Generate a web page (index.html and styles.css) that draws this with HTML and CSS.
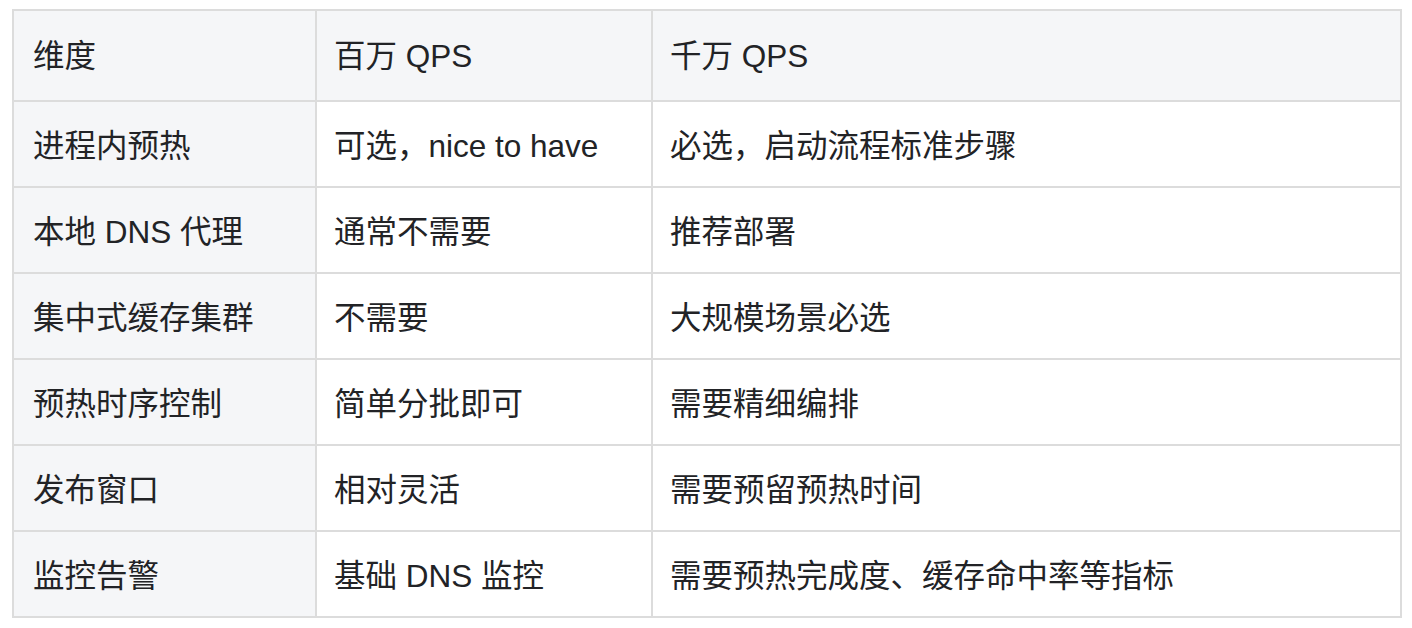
FILE: index.html
```html
<!DOCTYPE html>
<html lang="zh-CN">
<head>
<meta charset="utf-8">
<title>对比</title>
<link rel="stylesheet" href="styles.css">
</head>
<body>
<table class="cmp">
  <colgroup>
    <col class="w1">
    <col class="w2">
    <col class="w3">
  </colgroup>
  <thead>
    <tr><th class="c1">维度</th><th class="c2">百万 QPS</th><th class="c3">千万 QPS</th></tr>
  </thead>
  <tbody>
    <tr><td class="c1">进程内预热</td><td class="c2">可选，nice to have</td><td class="c3">必选，启动流程标准步骤</td></tr>
    <tr><td class="c1">本地 DNS 代理</td><td class="c2">通常不需要</td><td class="c3">推荐部署</td></tr>
    <tr><td class="c1">集中式缓存集群</td><td class="c2">不需要</td><td class="c3">大规模场景必选</td></tr>
    <tr><td class="c1">预热时序控制</td><td class="c2">简单分批即可</td><td class="c3">需要精细编排</td></tr>
    <tr><td class="c1">发布窗口</td><td class="c2">相对灵活</td><td class="c3">需要预留预热时间</td></tr>
    <tr><td class="c1">监控告警</td><td class="c2">基础 DNS 监控</td><td class="c3">需要预热完成度、缓存命中率等指标</td></tr>
  </tbody>
</table>
</body>
</html>
```
FILE: styles.css
```css
html, body {
  margin: 0;
  padding: 0;
  background: #ffffff;
}
body {
  padding: 9px 0 0 12px;
  font-family: "Liberation Sans", "Noto Sans CJK SC", sans-serif;
  font-size: 31.5px;
  color: #222326;
}
.cmp {
  border-collapse: collapse;
  table-layout: fixed;
  width: 1390px;
}
.w1 { width: 303px; }
.w2 { width: 336px; }
.cmp th, .cmp td {
  box-sizing: border-box;
  border: 2px solid #dcdcdc;
  text-align: left;
  font-weight: normal;
  padding: 0 0 3px 19px;
  white-space: nowrap;
  vertical-align: middle;
  background: #ffffff;
}
.cmp thead th {
  height: 91px;
  padding-bottom: 5px;
  background: #f5f6f8;
}
.cmp tbody td {
  height: 86px;
}
.cmp td.c1 {
  background: #f5f6f8;
}
.cmp td.c2, .cmp th.c2 { padding-left: 17px; }
.cmp td.c3, .cmp th.c3 { padding-left: 17px; }
```
